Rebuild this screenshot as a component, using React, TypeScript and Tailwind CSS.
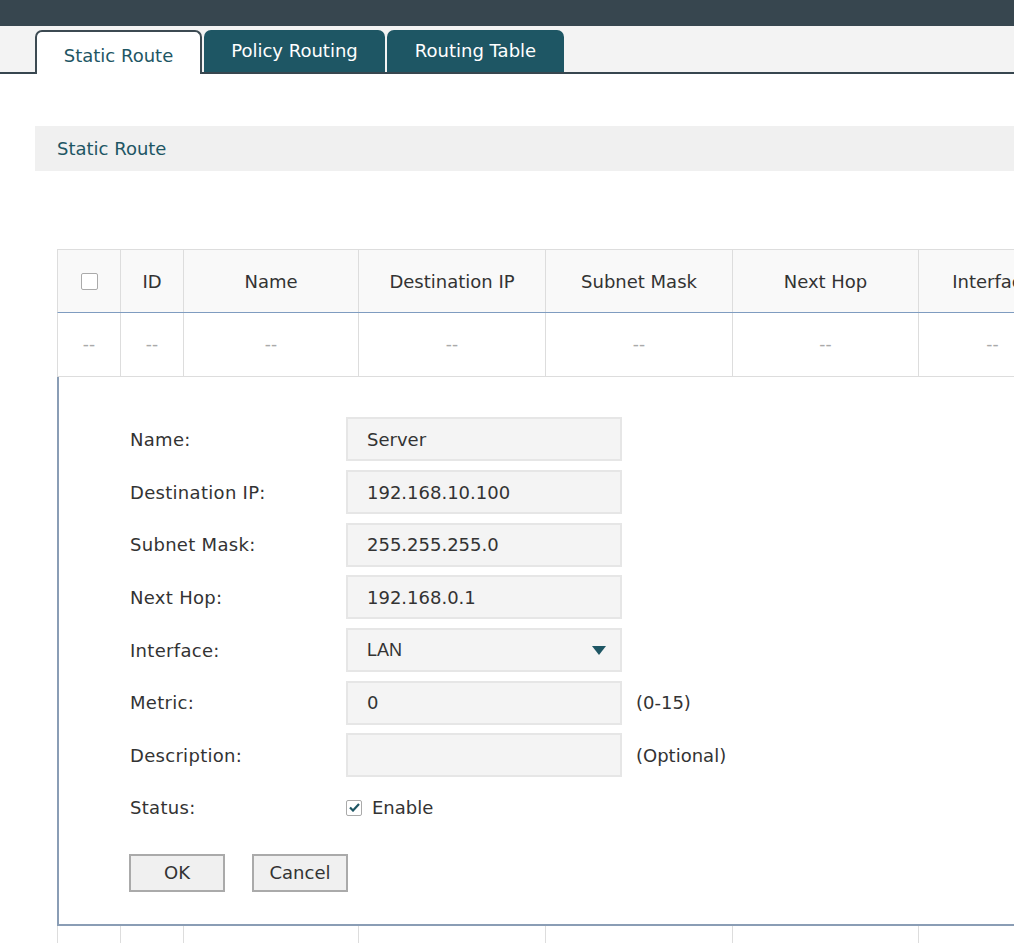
import React from "react";

const cols = [63, 63, 175, 187, 187, 186, 148];
const heads = ["", "ID", "Name", "Destination IP", "Subnet Mask", "Next Hop", "Interface"];

function Field({ label, value, hint, select }: { label: string; value: string; hint?: string; select?: boolean }) {
  return (
    <div className="flex items-center h-[52.7px]">
      <div className="w-[216px] text-[18px] tracking-[0.3px] text-[#333]">{label}</div>
      <div className="relative w-[276px] h-[44px] bg-[#f4f4f4] border-2 border-[#e6e6e6] flex items-center pl-[19px]">
        <span className={select ? "text-[18px] text-[#333] font-['Liberation_Sans',sans-serif]" : "text-[18px] text-[#333]"}>{value}</span>
        {select && (
          <svg className="absolute right-[14px] top-[16px]" width="14" height="9" viewBox="0 0 14 9">
            <path d="M0 0 H14 L7 9 Z" fill="#1e5664" />
          </svg>
        )}
      </div>
      {hint && <div className="ml-[14px] text-[18px] text-[#333]">{hint}</div>}
    </div>
  );
}

export default function App() {
  return (
    <div className="w-[1014px] h-[943px] overflow-hidden bg-white font-['DejaVu_Sans',Verdana,sans-serif]">
      <div className="h-[26px] bg-[#37464f]" />
      <div className="h-[48px] bg-[#f3f3f3] border-b-2 border-[#37464f] flex items-end pl-[35px] gap-[2px]">
        <div className="w-[167px] h-[44px] bg-white border-2 border-b-0 border-[#3c4a52] rounded-t-[7px] flex items-center justify-center text-[18px] text-[#1e5664] -mb-[2px] pt-[4px]">
          Static Route
        </div>
        <div className="w-[181px] h-[42px] bg-[#1e5664] rounded-t-[7px] flex items-center justify-center text-[18px] text-white pb-[2px]">
          Policy Routing
        </div>
        <div className="w-[177px] h-[42px] bg-[#1e5664] rounded-t-[7px] flex items-center justify-center text-[18px] text-white pb-[2px]">
          Routing Table
        </div>
      </div>
      <div className="mt-[52px] ml-[35px] h-[45px] bg-[#f0f0f0] flex items-center pl-[22px] text-[18px] text-[#1e5664]">
        Static Route
      </div>
      <div className="mt-[78px] ml-[57px] w-[1100px]">
        <div className="flex h-[64px] bg-[#f9f9f9] border-t border-l border-[#dddddd] border-b border-b-[#7f9cc0]">
          {heads.map((h, i) => (
            <div
              key={i}
              style={{ width: cols[i] }}
              className="shrink-0 border-r border-[#dddddd] flex items-center justify-center text-[18px] text-[#333]"
            >
              {i === 0 ? (
                <div className="w-[17px] h-[17px] border border-[#aaaaaa] rounded-[2px] bg-white" />
              ) : (
                h
              )}
            </div>
          ))}
        </div>
        <div className="flex h-[64px] border-l border-[#dddddd] border-b border-b-[#dddddd]">
          {heads.map((h, i) => (
            <div
              key={i}
              style={{ width: cols[i] }}
              className="shrink-0 border-r border-[#dddddd] flex items-center justify-center text-[17px] text-[#aaaaaa]"
            >
              --
            </div>
          ))}
        </div>
        <div className="h-[549px] border-l-2 border-[#8a9db5] border-b-2 border-b-[#8a9db5] pl-[71px] pt-[36px]">
          <Field label="Name:" value="Server" />
          <Field label="Destination IP:" value="192.168.10.100" />
          <Field label="Subnet Mask:" value="255.255.255.0" />
          <Field label="Next Hop:" value="192.168.0.1" />
          <Field label="Interface:" value="LAN" select />
          <Field label="Metric:" value="0" hint="(0-15)" />
          <Field label="Description:" value="" hint="(Optional)" />
          <div className="flex items-center h-[52px]">
            <div className="w-[216px] text-[18px] tracking-[0.3px] text-[#333]">Status:</div>
            <div className="flex items-center gap-[10px]">
              <div className="w-[16px] h-[16px] border border-[#aaaaaa] rounded-[2px] bg-white flex items-center justify-center">
                <svg width="11" height="9" viewBox="0 0 11 9">
                  <path d="M1 4.5 L4 7.5 L10 1" stroke="#1e5664" strokeWidth="2.2" fill="none" />
                </svg>
              </div>
              <span className="text-[18px] text-[#333]">Enable</span>
            </div>
          </div>
          <div className="flex gap-[27px] mt-[20px] -ml-[1px]">
            <button className="w-[96px] h-[38px] border-2 border-[#aaaaaa] bg-[#f0f0f0] text-[18px] text-[#333]">OK</button>
            <button className="w-[96px] h-[38px] border-2 border-[#aaaaaa] bg-[#f0f0f0] text-[18px] text-[#333]">Cancel</button>
          </div>
        </div>
        <div className="flex h-[40px] border-l border-[#dddddd]">
          {heads.map((h, i) => (
            <div key={i} style={{ width: cols[i] }} className="shrink-0 border-r border-[#dddddd]" />
          ))}
        </div>
      </div>
    </div>
  );
}
